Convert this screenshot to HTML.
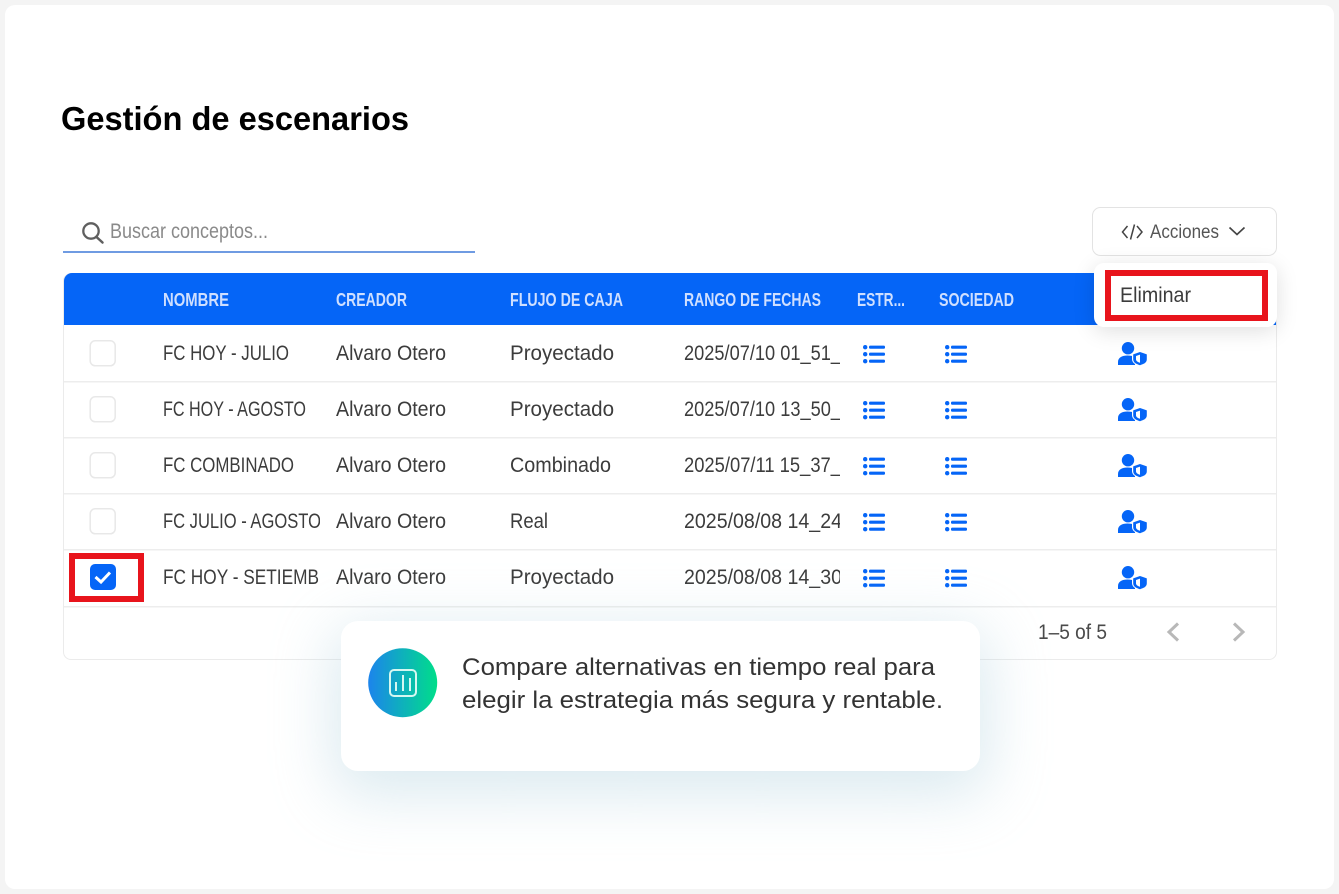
<!DOCTYPE html>
<html lang="es"><head><meta charset="utf-8"><title>Gestión de escenarios</title>
<style>
html,body{margin:0;padding:0;width:1339px;height:894px;overflow:hidden;background:#f4f4f4}
.abs{position:absolute}
svg{position:absolute;left:0;top:0}
text{font-family:"Liberation Sans",sans-serif}
.t{font-size:21px;fill:#3c3c3c}
.h{font-size:18px;font-weight:bold;fill:#cfdfff}
</style></head><body>
<div class="abs" style="left:5px;top:5px;width:1329px;height:884px;background:#fff;border-radius:10px"></div>
<div class="abs" style="left:63px;top:273px;width:1212px;height:385px;background:#fff;border:1px solid #ebebeb;border-radius:8px"></div>
<div class="abs" style="left:64px;top:273px;width:1212px;height:52px;background:#0565f7;border-radius:8px 8px 0 0"></div>
<svg width="1339" height="894" viewBox="0 0 1339 894">
<defs>
<clipPath id="c1"><rect x="160" y="330" width="160" height="270"/></clipPath>
<clipPath id="c2"><rect x="680" y="330" width="160" height="270"/></clipPath>
<g id="list" fill="#0565f7"><circle cx="2.200" cy="2.200" r="2.200"/><circle cx="2.200" cy="9.200" r="2.200"/><circle cx="2.200" cy="16.200" r="2.200"/><rect x="6" y=".6" width="16" height="3.200" rx="1.200"/><rect x="6" y="7.600" width="16" height="3.200" rx="1.200"/><rect x="6" y="14.600" width="16" height="3.200" rx="1.200"/></g>
<g id="person"><circle cx="10" cy="6.200" r="6.200" fill="#0565f7"/><path d="M0 23v-3c0-4.500 4-6.500 9.500-6.500 3 0 5.500.5 7.500 1.700v7.800z" fill="#0565f7"/><path d="M22 8.500l8 2.800v5.700c0 3.600-3 5.700-8 7.300-5-1.600-8-3.700-8-7.300v-5.700z" fill="#fff"/><path d="M22 10l6.800 2.400v4.800c0 3-2.500 4.700-6.800 6-4.300-1.300-6.800-3-6.800-6v-4.800z" fill="#0565f7"/><path d="M22 12.600l-4 1.400v3.300c0 1.700 1.500 2.800 4 3.500z" fill="#fff"/></g>
</defs>

<text x="61" y="130" font-size="33" font-weight="bold" fill="#000" textLength="348" lengthAdjust="spacingAndGlyphs">Gestión de escenarios</text>

<circle cx="91" cy="231" r="7.700" fill="none" stroke="#5f5f5f" stroke-width="2.300"/><path d="M96.500 237l6 5.500" stroke="#5f5f5f" stroke-width="2.500" stroke-linecap="round"/>
<text x="110" y="238" font-size="21" fill="#8a8a8a" textLength="158" lengthAdjust="spacingAndGlyphs">Buscar conceptos...</text>
<rect x="63" y="251" width="412" height="2" fill="#6f9be2"/>

<rect x="1092.500" y="207.500" width="184" height="48" rx="8" fill="#fff" stroke="#e3e3e3"/>
<path d="M1127.500 226l-5 6 5 6M1137 226l5 6-5 6M1134.500 224.500l-4 15" fill="none" stroke="#444" stroke-width="1.500"/>
<text x="1150" y="238" font-size="19" fill="#555" textLength="69" lengthAdjust="spacingAndGlyphs">Acciones</text>
<path d="M1229.500 227.500l7.500 7 7.500-7" fill="none" stroke="#444" stroke-width="1.700"/>

<g class="h">
<text x="163" y="306" textLength="66" lengthAdjust="spacingAndGlyphs">NOMBRE</text>
<text x="336" y="306" textLength="71" lengthAdjust="spacingAndGlyphs">CREADOR</text>
<text x="510" y="306" textLength="113" lengthAdjust="spacingAndGlyphs">FLUJO DE CAJA</text>
<text x="684" y="306" textLength="137" lengthAdjust="spacingAndGlyphs">RANGO DE FECHAS</text>
<text x="857" y="306" textLength="48" lengthAdjust="spacingAndGlyphs">ESTR...</text>
<text x="939" y="306" textLength="75" lengthAdjust="spacingAndGlyphs">SOCIEDAD</text>
</g>

<g fill="#ededed">
<rect x="64" y="381" width="1212" height="1.500"/>
<rect x="64" y="437" width="1212" height="1.500"/>
<rect x="64" y="493" width="1212" height="1.500"/>
<rect x="64" y="549" width="1212" height="1.500"/>
<rect x="64" y="606" width="1212" height="1.500"/>
</g>

<g fill="#fff" stroke="#e8e8e8" stroke-width="1.500">
<rect x="90.200" y="340.800" width="25" height="25" rx="5"/>
<rect x="90.200" y="396.800" width="25" height="25" rx="5"/>
<rect x="90.200" y="452.800" width="25" height="25" rx="5"/>
<rect x="90.200" y="508.800" width="25" height="25" rx="5"/>
</g>
<rect x="90" y="564" width="26" height="26" rx="5" fill="#0565f7"/>
<path d="M95.500 577l5.500 5 9-9.500" fill="none" stroke="#fff" stroke-width="3"/>

<g class="t" clip-path="url(#c1)">
<text x="163" y="360" textLength="126" lengthAdjust="spacingAndGlyphs">FC HOY - JULIO</text>
<text x="163" y="416" textLength="143" lengthAdjust="spacingAndGlyphs">FC HOY - AGOSTO</text>
<text x="163" y="472" textLength="131" lengthAdjust="spacingAndGlyphs">FC COMBINADO</text>
<text x="163" y="528" textLength="158" lengthAdjust="spacingAndGlyphs">FC JULIO - AGOSTO</text>
<text x="163" y="584" textLength="180" lengthAdjust="spacingAndGlyphs">FC HOY - SETIEMBRE</text>
</g>
<g class="t">
<text x="336" y="360" textLength="110" lengthAdjust="spacingAndGlyphs">Alvaro Otero</text>
<text x="336" y="416" textLength="110" lengthAdjust="spacingAndGlyphs">Alvaro Otero</text>
<text x="336" y="472" textLength="110" lengthAdjust="spacingAndGlyphs">Alvaro Otero</text>
<text x="336" y="528" textLength="110" lengthAdjust="spacingAndGlyphs">Alvaro Otero</text>
<text x="336" y="584" textLength="110" lengthAdjust="spacingAndGlyphs">Alvaro Otero</text>
<text x="510" y="360" textLength="104" lengthAdjust="spacingAndGlyphs">Proyectado</text>
<text x="510" y="416" textLength="104" lengthAdjust="spacingAndGlyphs">Proyectado</text>
<text x="510" y="472" textLength="101" lengthAdjust="spacingAndGlyphs">Combinado</text>
<text x="510" y="528" textLength="38" lengthAdjust="spacingAndGlyphs">Real</text>
<text x="510" y="584" textLength="104" lengthAdjust="spacingAndGlyphs">Proyectado</text>
</g>
<g class="t" clip-path="url(#c2)">
<text x="684" y="360" textLength="157" lengthAdjust="spacingAndGlyphs">2025/07/10 01_51_</text>
<text x="684" y="416" textLength="157" lengthAdjust="spacingAndGlyphs">2025/07/10 13_50_</text>
<text x="684" y="472" textLength="157" lengthAdjust="spacingAndGlyphs">2025/07/11 15_37_</text>
<text x="684" y="528" textLength="158" lengthAdjust="spacingAndGlyphs">2025/08/08 14_24</text>
<text x="684" y="584" textLength="158" lengthAdjust="spacingAndGlyphs">2025/08/08 14_30</text>
</g>

<use href="#list" x="863" y="345"/><use href="#list" x="945" y="345"/>
<use href="#list" x="863" y="401"/><use href="#list" x="945" y="401"/>
<use href="#list" x="863" y="457"/><use href="#list" x="945" y="457"/>
<use href="#list" x="863" y="513"/><use href="#list" x="945" y="513"/>
<use href="#list" x="863" y="569"/><use href="#list" x="945" y="569"/>
<use href="#person" x="1118" y="342"/>
<use href="#person" x="1118" y="398"/>
<use href="#person" x="1118" y="454"/>
<use href="#person" x="1118" y="510"/>
<use href="#person" x="1118" y="566"/>

<text x="1038" y="639" font-size="21" fill="#4a4a4a" textLength="69" lengthAdjust="spacingAndGlyphs">1–5 of 5</text>
<path d="M1178 623.500l-9 8.500 9 8.500M1234 623.500l9 8.500-9 8.500" fill="none" stroke="#b8b8b8" stroke-width="3"/>
</svg>

<div class="abs" style="left:341px;top:621px;width:639px;height:150px;background:#fff;border-radius:17px;box-shadow:0 16px 60px 8px rgba(170,205,220,.42)"></div>
<div class="abs" style="left:1094px;top:263px;width:183px;height:64px;background:#fff;border-radius:10px;box-shadow:0 4px 22px rgba(0,0,0,.13)"></div>
<div class="abs" style="left:69px;top:553px;width:63px;height:37px;border:6px solid #e8141c"></div>

<svg width="1339" height="894" viewBox="0 0 1339 894">
<defs><linearGradient id="g" x1="0" y1="0" x2="1" y2="0"><stop offset="0" stop-color="#1c84ec"/><stop offset="1" stop-color="#00de8a"/></linearGradient></defs>
<circle cx="402.700" cy="682.700" r="34.500" fill="url(#g)"/>
<rect x="390" y="670" width="26" height="26" rx="4" fill="none" stroke="#d6f8f1" stroke-width="2"/>
<path d="M396 691v-9M403 691v-16M410 691v-13" stroke="#d6f8f1" stroke-width="2"/>
<text x="462" y="675" font-size="24" fill="#333" textLength="473" lengthAdjust="spacingAndGlyphs">Compare alternativas en tiempo real para</text>
<text x="462" y="708" font-size="24" fill="#333" textLength="481" lengthAdjust="spacingAndGlyphs">elegir la estrategia más segura y rentable.</text>
<rect x="1108" y="273" width="157" height="45" fill="#fff" stroke="#e8141c" stroke-width="6"/>
<text x="1120" y="302" font-size="21" fill="#3c3c3c" textLength="71" lengthAdjust="spacingAndGlyphs">Eliminar</text>
</svg>
</body></html>
